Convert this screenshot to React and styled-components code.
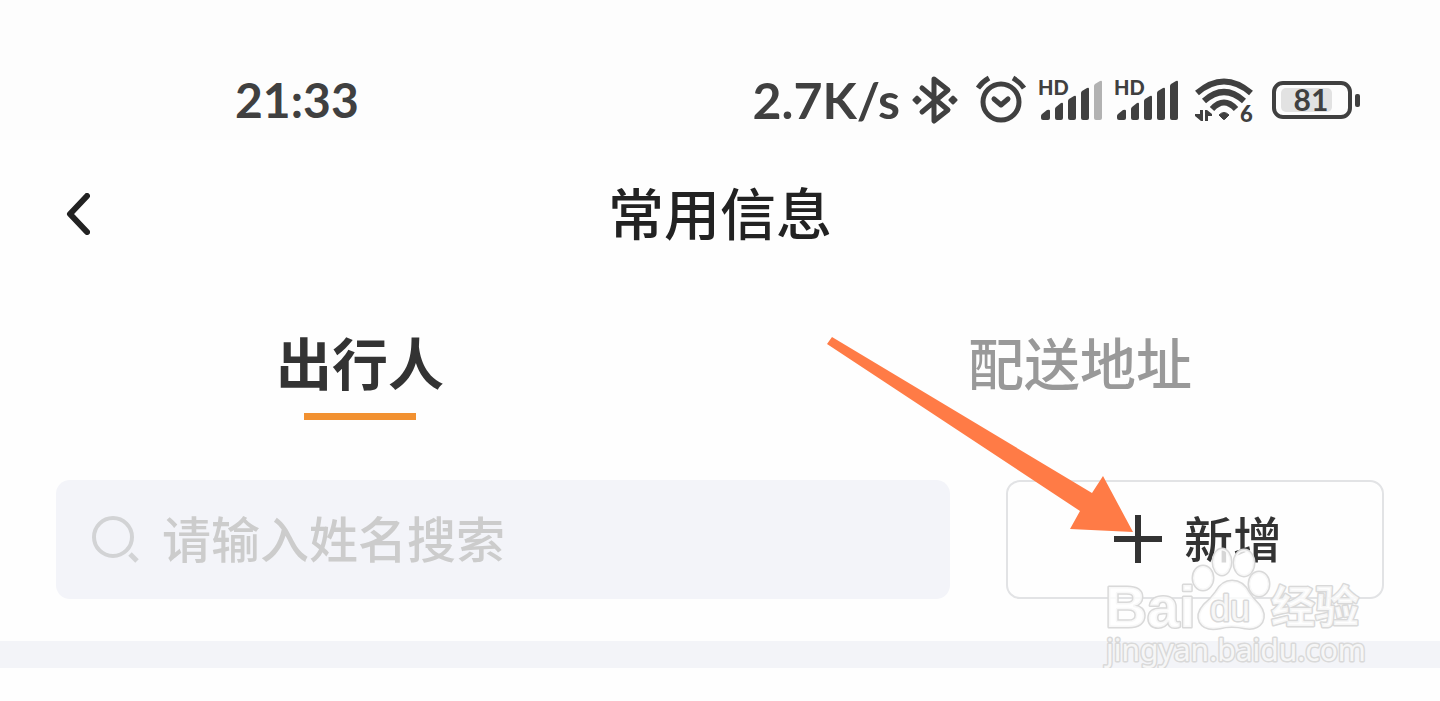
import { useState } from "react";
import styled, { createGlobalStyle } from "styled-components";

const TABS = [
  { id: "traveler", label: "出行人" },
  { id: "address", label: "配送地址" },
];

const BluetoothIcon = () => (
  <svg width="48" height="50" viewBox="0 0 48 50" fill="none" aria-hidden="true">
    <path
      d="M10 13L36 35L22 46V4L36 15L10 37"
      stroke="#404040"
      strokeWidth="5"
      strokeLinecap="round"
      strokeLinejoin="round"
    />
    <path
      d="M5 22L8 25L5 28L2 25ZM41 22L44 25L41 28L38 25Z"
      fill="#404040"
      stroke="#404040"
      strokeWidth="3"
      strokeLinejoin="round"
    />
  </svg>
);

const AlarmIcon = () => (
  <svg width="50" height="50" viewBox="0 0 50 50" fill="none" stroke="#404040" aria-hidden="true">
    <circle cx="25" cy="27" r="18" strokeWidth="5" />
    <path d="M18 24L25 30L32 24" strokeWidth="5" strokeLinecap="round" strokeLinejoin="round" />
    <path d="M2 13Q6 7 13 3M37 3Q44 7 48 13" strokeWidth="5" />
  </svg>
);

const SignalIcon = ({ lastColor = "#404040" }) => (
  <svg width="64" height="52" viewBox="0 -4 64 52" fill="#404040" aria-hidden="true">
    <text x="0" y="17" fontFamily="Lato, sans-serif" fontSize="20" fontWeight="900">
      HD
    </text>
    <path d="M3 38Q3 37 4 36L9 32Q12 31 12 33V40Q12 42 10 42H5Q3 42 3 40Z" />
    <path d="M17 31Q17 30 18 29L23 25Q25 24 25 26V40Q25 42 23 42H19Q17 42 17 40Z" />
    <path d="M30 23Q30 22 31 21L36 18Q38 17 38 19V40Q38 42 36 42H32Q30 42 30 40Z" />
    <path d="M43 15Q43 14 44 13L49 10Q51 9 51 11V40Q51 42 49 42H45Q43 42 43 40Z" />
    <path d="M56 8Q56 7 57 6L62 3Q64 2 64 4V40Q64 42 62 42H58Q56 42 56 40Z" fill={lastColor} />
  </svg>
);

const WifiIcon = () => (
  <svg width="62" height="56" viewBox="0 -4 62 56" fill="none" aria-hidden="true">
    <g stroke="#404040" strokeWidth="6">
      <path d="M3 17Q30 -6 57 17" />
      <path d="M10 25Q30 7 50 25" />
      <path d="M18 33Q30 20 42 33" />
    </g>
    <path d="M25 39Q30 34 35 39L31 43Q30 44 29 43Z" fill="#404040" stroke="#404040" />
    <path d="M6 34H9V45H7L1 40V38H6ZM11 45V34H13L18 38V40H14V45Z" fill="#404040" />
    <text x="46" y="46" fontFamily="Lato, sans-serif" fontSize="22" fontWeight="900" fill="#404040">
      6
    </text>
  </svg>
);

const BatteryIcon = () => (
  <svg width="88" height="38" viewBox="0 0 88 38" role="img" aria-label="81">
    <rect x="9" y="7" width="51" height="24" rx="5" fill="#e2e2e2" />
    <rect x="2" y="2" width="76" height="34" rx="9" fill="none" stroke="#404040" strokeWidth="4" />
    <rect x="83" y="13" width="5" height="13" rx="2" fill="#404040" />
    <text
      x="39"
      y="30"
      textAnchor="middle"
      fontFamily="Lato, sans-serif"
      fontSize="30"
      fontWeight="700"
      fill="#404040"
    >
      81
    </text>
  </svg>
);

const BackIcon = () => (
  <svg width="26" height="42" viewBox="0 0 26 42" fill="none" aria-hidden="true">
    <path d="M23 3L6 21L23 39" stroke="#222" strokeWidth="6" strokeLinecap="round" strokeLinejoin="round" />
  </svg>
);

const SearchIcon = () => (
  <svg width="48" height="48" viewBox="0 0 48 48" fill="none" stroke="#d2d3d5" aria-hidden="true">
    <circle cx="21" cy="21" r="19" strokeWidth="4" />
    <path d="M38 38L45 45" strokeWidth="5" />
  </svg>
);

const PlusIcon = () => (
  <svg width="48" height="48" viewBox="0 0 48 48" stroke="#333" aria-hidden="true">
    <path d="M0 24H48M24 0V48" strokeWidth="6" />
  </svg>
);

const Watermark = () => (
  <WatermarkSvg viewBox="0 0 270 130" aria-hidden="true">
    <g fill="#fff" fillOpacity="0.8" stroke="#d9d9d9" strokeWidth="3" strokeLinejoin="round" paintOrder="stroke">
      <text x="3" y="82" fontFamily="Liberation Sans, sans-serif" fontSize="58" fontWeight="700">
        Bai
      </text>
      <ellipse cx="101" cy="33" rx="10" ry="12" />
      <ellipse cx="120" cy="17" rx="9" ry="13" />
      <ellipse cx="142" cy="18" rx="10" ry="13" />
      <ellipse cx="157" cy="39" rx="10" ry="12" />
      <path d="M130 36Q141 36 147 48Q151 54 157 60Q164 69 160 77Q155 85 143 83Q129 80 118 83Q103 86 98 77Q94 69 102 60Q109 54 114 47Q120 36 130 36Z" />
      <text x="108" y="76" fontFamily="Liberation Sans, sans-serif" fontSize="36">
        du
      </text>
      <text x="169" y="78" fontFamily="Noto Sans CJK SC, sans-serif" fontSize="44" fontWeight="700">
        经验
      </text>
      <text x="4" y="116" fontFamily="Noto Sans, sans-serif" fontSize="30">
        jingyan.baidu.com
      </text>
    </g>
  </WatermarkSvg>
);

const App = () => {
  const [activeTab, setActiveTab] = useState("traveler");
  const [keyword, setKeyword] = useState("");

  return (
    <>
      <GlobalStyle />
      <StatusBar>
        <StatusText $size={48}>21:33</StatusText>
        <StatusIcons>
          <StatusText $size={50}>2.7K/s</StatusText>
          <BluetoothIcon />
          <SignalGroup>
            <AlarmIcon />
            <SignalIcon lastColor="#b2b2b2" />
            <SignalIcon />
          </SignalGroup>
          <WifiIcon />
          <BatteryIcon />
        </StatusIcons>
      </StatusBar>

      <Header>
        <BackButton type="button" aria-label="返回">
          <BackIcon />
        </BackButton>
        <Title>常用信息</Title>
      </Header>

      <TabList role="tablist">
        {TABS.map(tab => (
          <Tab
            key={tab.id}
            type="button"
            role="tab"
            aria-selected={activeTab === tab.id}
            $active={activeTab === tab.id}
            onClick={() => setActiveTab(tab.id)}
          >
            {tab.label}
          </Tab>
        ))}
      </TabList>

      <Toolbar>
        <SearchBox>
          <SearchIcon />
          <SearchInput
            type="text"
            aria-label="请输入姓名搜索"
            placeholder="请输入姓名搜索"
            value={keyword}
            onChange={e => setKeyword(e.target.value)}
          />
        </SearchBox>
        <AddButton type="button">
          <PlusIcon />
          <AddLabel>新增</AddLabel>
        </AddButton>
        <Arrow viewBox="0 0 306 196" aria-hidden="true">
          <path d="M5 0L265 156L276 139L306 195L243 192L253 174L0 7Z" fill="#ff7b46" />
        </Arrow>
        <Watermark />
      </Toolbar>
      <Divider />
    </>
  );
};
export default App;

const GlobalStyle = createGlobalStyle`
  * {
    box-sizing: border-box;
  }

  body {
    margin: 0;
    background: #fefefe;
    color: #333;
    font-family: "Noto Sans CJK SC", sans-serif;
  }

  button,
  input {
    margin: 0;
    padding: 0;
    border: 0;
    background: none;
    color: inherit;
    font-family: inherit;
  }

  svg {
    flex-shrink: 0;
  }
`;

const StatusBar = styled.div`
  display: flex;
  align-items: center;
  justify-content: space-between;
  padding: 60px 80px 0 235px;
  background: #fdfdfd;
`;

const StatusIcons = styled.div`
  display: flex;
  align-items: center;
  gap: 16px;

  & > span {
    margin-right: -4px;
  }
`;

const SignalGroup = styled.div`
  display: flex;
  align-items: center;
  gap: 12px;
`;

const StatusText = styled.span`
  color: #404040;
  font-family: Lato, sans-serif;
  font-size: ${({ $size }) => $size}px;
  font-weight: 700;
  line-height: 80px;
`;

const Header = styled.header`
  display: grid;
  grid-template-columns: 1fr auto 1fr;
  align-items: center;
  padding: 34px 64px 29px;
`;

const BackButton = styled.button`
  display: flex;
  justify-self: start;
  cursor: pointer;
`;

const Title = styled.h1`
  margin: 0;
  padding-bottom: 6px;
  color: #222;
  font-size: 56px;
  font-weight: 500;
  line-height: 74px;
`;

const TabList = styled.div`
  display: flex;
  padding-top: 38px;
`;

const Tab = styled.button`
  flex: 1;
  display: flex;
  flex-direction: column;
  align-items: center;
  gap: 12px;
  color: ${({ $active }) => ($active ? "#333" : "#999")};
  font-size: 56px;
  font-weight: ${({ $active }) => ($active ? 700 : 500)};
  line-height: 80px;
  cursor: pointer;

  &::after {
    content: "";
    width: 112px;
    height: 7px;
    background: ${({ $active }) => ($active ? "#f29130" : "transparent")};
  }
`;

const Toolbar = styled.div`
  position: relative;
  display: flex;
  gap: 56px;
  padding: 60px 56px 42px;
`;

const SearchBox = styled.div`
  flex: 1;
  min-width: 0;
  display: flex;
  align-items: center;
  gap: 22px;
  padding: 0 36px;
  border-radius: 14px;
  background: #f3f4f9;
`;

const SearchInput = styled.input`
  flex: 1;
  min-width: 0;
  height: 119px;
  padding-bottom: 6px;
  outline: none;
  font-size: 49px;
  font-weight: 500;

  &::placeholder {
    color: #ccc;
    opacity: 1;
  }
`;

const AddButton = styled.button`
  display: flex;
  align-items: center;
  justify-content: center;
  gap: 22px;
  width: 378px;
  padding: 0 0 2px 6px;
  border: 2px solid #e2e3e5;
  border-radius: 14px;
  font-size: 49px;
  font-weight: 500;
  cursor: pointer;
`;

const AddLabel = styled.span`
  padding-bottom: 4px;
`;

/* 新增 버튼을 가리키는 화살표 */
const Arrow = styled.svg`
  position: absolute;
  right: 307px;
  bottom: 108px;
  width: 306px;
  height: 196px;
  pointer-events: none;
`;

const WatermarkSvg = styled.svg`
  position: absolute;
  right: 68px;
  bottom: -34px;
  width: 270px;
  height: 130px;
  pointer-events: none;
`;

const Divider = styled.div`
  height: 27px;
  background: #f3f4f8;
`;
